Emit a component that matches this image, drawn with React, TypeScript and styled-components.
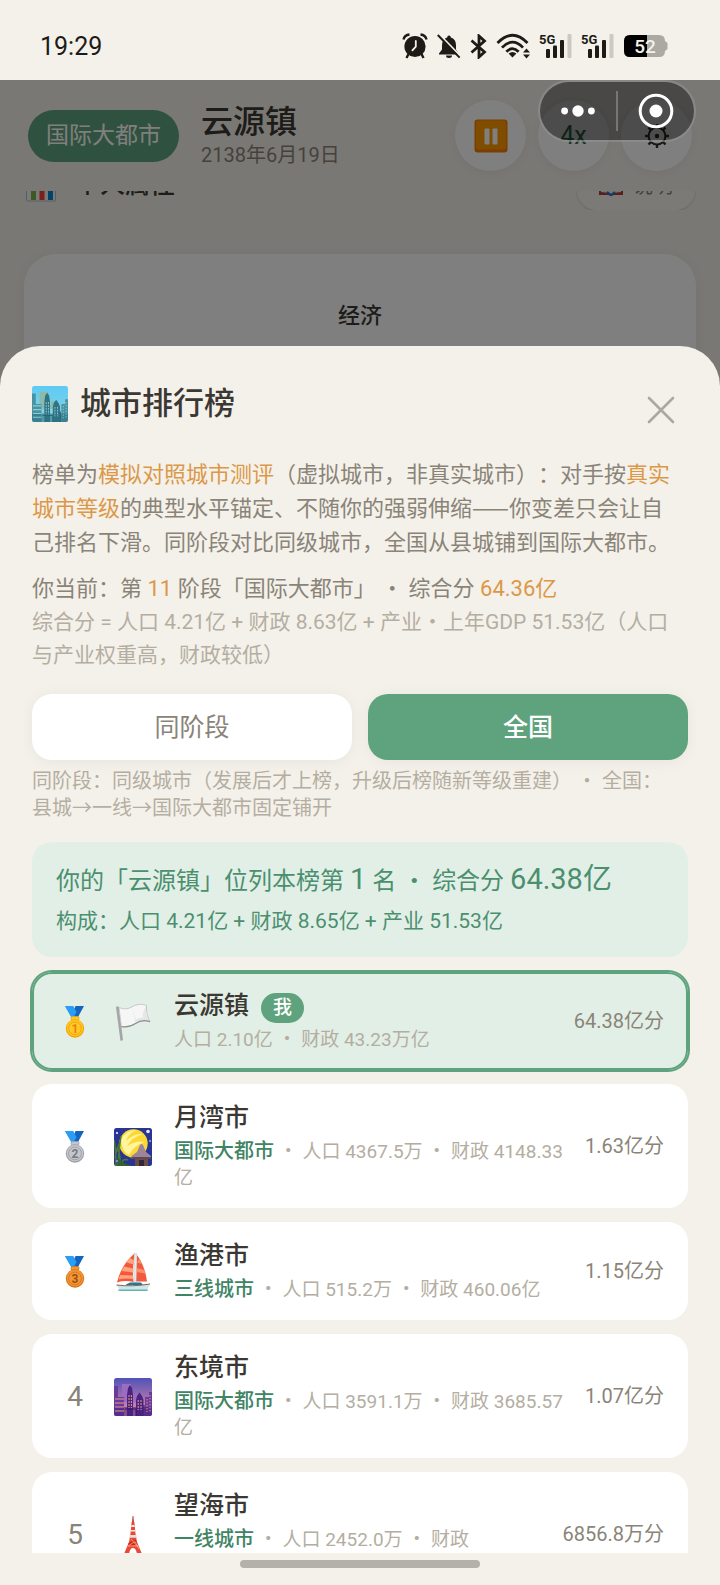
import React, { useState } from 'react';
import styled, { createGlobalStyle } from 'styled-components';

const GlobalStyle = createGlobalStyle`
  * {
    box-sizing: border-box;
  }
  body {
    margin: 0;
    background: #f4f1ea;
    font-family: Roboto, 'Noto Sans CJK SC', sans-serif;
    text-spacing-trim: space-all;
    color: #3b3833;
  }
  button {
    font-family: inherit;
    border: none;
    padding: 0;
    cursor: pointer;
  }
`;

const Screen = styled.div`
  position: relative;
  height: 100vh;
  display: flex;
  flex-direction: column;
  overflow: hidden;
`;

const StatusBar = styled.div`
  flex: none;
  height: 80px;
  padding: 12px 52px 0 40px;
  display: flex;
  justify-content: space-between;
  align-items: center;
  color: #1d1b18;
`;

const Clock = styled.span`
  font-size: 25px;
`;

const StatusIcons = styled.div`
  display: flex;
  align-items: center;
  gap: 9px;
`;

const Page = styled.main`
  flex: 1;
  min-height: 0;
`;

const Header = styled.header`
  height: 111px;
  padding: 0 28px;
  display: flex;
  align-items: center;
  gap: 22px;
`;

const StagePill = styled.span`
  padding: 0 18px;
  line-height: 52px;
  border-radius: 26px;
  background: #5fa37e;
  color: #fff;
  font-size: 23px;
`;

const TownInfo = styled.div`
  flex: 1;
`;

const TownName = styled.div`
  font-size: 32px;
  font-weight: 500;
  line-height: 38px;
`;

const TownDate = styled.div`
  font-size: 20px;
  line-height: 28px;
  color: #8a8478;
`;

const HeaderActions = styled.div`
  display: flex;
  gap: 12px;
`;

const RoundButton = styled.button`
  width: 71px;
  height: 71px;
  border-radius: 50%;
  background: #fff;
  color: #2f6e54;
  font-size: 25px;
  display: flex;
  align-items: center;
  justify-content: center;
  box-shadow: 0 2px 12px rgba(0, 0, 0, 0.06);
`;

// the section row is scrolled halfway under the header
const ScrolledSection = styled.div`
  height: 19px;
  overflow: hidden;
  display: flex;
  align-items: flex-end;
  padding: 0 25px;
`;

const SectionRow = styled.div`
  flex: 1;
  height: 51px;
  display: flex;
  align-items: center;
  gap: 18px;
`;

const SectionTitle = styled.h2`
  flex: 1;
  margin: 0;
  font-size: 25px;
  font-weight: 500;
  line-height: 34px;
`;

const HelpButton = styled.button`
  height: 51px;
  padding: 0 22px;
  border-radius: 20px;
  background: #f7f5ef;
  box-shadow: 0 1px 3px rgba(0, 0, 0, 0.15);
  color: #8a8478;
  font-size: 20px;
  display: flex;
  align-items: center;
  gap: 10px;
`;

const EconomyCard = styled.section`
  margin: 44px 24px 0;
  height: 200px;
  padding-top: 44px;
  border-radius: 32px;
  background: #fff;
  text-align: center;
  font-size: 22px;
  font-weight: 500;
  line-height: 36px;
  box-shadow: 0 2px 16px rgba(0, 0, 0, 0.06);
`;

const Overlay = styled.div`
  position: absolute;
  inset: 80px 0 0;
  padding-top: 266px;
  display: flex;
  flex-direction: column;
  background: rgba(0, 0, 0, 0.5);
`;

const Capsule = styled.div`
  position: absolute;
  top: 80px;
  right: 24px;
  width: 158px;
  height: 62px;
  border: 2px solid rgba(255, 255, 255, 0.35);
  border-radius: 31px;
  background: rgba(0, 0, 0, 0.4);
  display: flex;
  align-items: center;
`;

const CapsuleButton = styled.button`
  flex: 1;
  height: 100%;
  background: none;
  display: flex;
  align-items: center;
  justify-content: center;
`;

const CapsuleDivider = styled.span`
  width: 2px;
  height: 40px;
  background: rgba(255, 255, 255, 0.25);
`;

const Sheet = styled.section`
  flex: 1;
  min-height: 0;
  display: flex;
  flex-direction: column;
  padding: 0 32px;
  border-radius: 40px 40px 0 0;
  background: #f4f1ea;
`;

const SheetHeader = styled.div`
  flex: none;
  height: 112px;
  padding-top: 4px;
  display: flex;
  align-items: center;
  gap: 12px;
`;

const SheetTitle = styled.h1`
  flex: 1;
  margin: 0;
  font-size: 31px;
  font-weight: 500;
  line-height: 40px;
`;

const CloseButton = styled.button`
  width: 54px;
  height: 54px;
  background: none;
  display: flex;
  align-items: center;
  justify-content: center;
  align-self: flex-end;
  margin-bottom: 21px;
`;

const SheetBody = styled.div`
  flex: 1;
  min-height: 0;
  margin: 0 -8px;
  padding: 0 8px;
  overflow: hidden;
`;

const Intro = styled.p`
  margin: 0 0 12px;
  padding-right: 12px;
  font-size: 22px;
  line-height: 34px;
  color: #8a8478;
`;

const Current = styled.p`
  margin: 0;
  font-size: 22px;
  line-height: 34px;
  color: #8a8478;
`;

const Formula = styled.p`
  margin: 0;
  padding-right: 12px;
  font-size: 21px;
  line-height: 33px;
  color: #b4aea2;
`;

const Accent = styled.span`
  color: #dc9849;
`;

// dots and dashes keep their full-width form
const Wide = styled.span`
  font-family: 'Noto Sans CJK SC', sans-serif;
  line-height: 1;
`;

const Tabs = styled.div`
  margin-top: 22px;
  display: flex;
  gap: 16px;
`;

const Tab = styled.button<{ $active: boolean }>`
  flex: 1;
  height: 66px;
  padding-bottom: 5px;
  border-radius: 20px;
  font-size: 25px;
  font-weight: ${(props) => (props.$active ? 500 : 400)};
  color: ${(props) => (props.$active ? '#fff' : '#8a8478')};
  background: ${(props) => (props.$active ? '#5fa37e' : '#fff')};
  box-shadow: 0 2px 16px rgba(0, 0, 0, 0.05);
`;

const Hint = styled.p`
  margin: 8px 0 20px;
  padding-right: 12px;
  font-size: 20px;
  line-height: 27px;
  color: #b4aea2;
`;

const Summary = styled.div`
  padding: 17px 24px;
  border-radius: 20px;
  background: #e2efe6;
  color: #4b8f70;
`;

const SummaryLine = styled.div`
  font-size: 24px;
  line-height: 44px;
`;

const Big = styled.span`
  font-size: 29px;
  line-height: 1;
`;

const SummaryDetail = styled.div`
  font-size: 21px;
  line-height: 37px;
`;

const RankList = styled.ol`
  list-style: none;
  margin: 15px 0 0;
  padding: 0;
  display: flex;
  flex-direction: column;
  gap: 14px;
`;

const RankRow = styled.li<{ $me?: boolean }>`
  display: flex;
  align-items: center;
  gap: 20px;
  padding: 17px 24px;
  border-radius: 20px;
  background: ${(props) => (props.$me ? '#e2efe6' : '#fff')};
  box-shadow: ${(props) =>
    props.$me ? '0 0 0 2px #5fa37e, inset 0 0 0 2px #5fa37e' : 'none'};
`;

const RankCell = styled.div`
  flex: none;
  width: 38px;
  padding-top: 2px;
  display: flex;
  justify-content: center;
  font-size: 28px;
  line-height: 38px;
  color: #8a8478;
`;

const CityIcon = styled.div`
  flex: none;
  width: 40px;
  padding-top: 2px;
  display: flex;
`;

const CityInfo = styled.div`
  flex: 1;
  min-width: 0;
`;

const CityName = styled.div`
  display: flex;
  align-items: flex-end;
  gap: 12px;
  margin-bottom: 4px;
  font-size: 25px;
  font-weight: 500;
  line-height: 34px;
`;

const MeBadge = styled.span`
  padding: 0 12px;
  border-radius: 15px;
  background: #5fa37e;
  color: #fff;
  font-size: 19px;
  line-height: 30px;
`;

const CityMeta = styled.div`
  font-size: 19px;
  line-height: 26px;
  color: #b4aea2;
`;

const Tier = styled.span`
  font-size: 20px;
  font-weight: 500;
  line-height: 1;
  color: #3f8464;
`;

const Score = styled.div`
  flex: none;
  font-size: 20px;
  line-height: 30px;
  color: #8a8478;
`;

const HomeBar = styled.div`
  flex: none;
  height: 32px;
  padding-top: 7px;
  display: flex;
  justify-content: center;

  &::after {
    content: '';
    width: 240px;
    height: 8px;
    border-radius: 4px;
    background: #b4b1aa;
  }
`;

const AlarmIcon = () => (
  <svg width="26" height="26" viewBox="0 0 26 26" fill="none">
    <path d="M1.5 6.5 Q2.5 2 7.5 1.5 M24.5 6.5 Q23.5 2 18.5 1.5" stroke="#1d1b18" strokeWidth="2.4" />
    <circle cx="13" cy="13.5" r="10.6" fill="#1d1b18" />
    <path d="M6.5 21 L4.5 25 M19.5 21 L21.5 25" stroke="#1d1b18" strokeWidth="2.4" />
    <path d="M13.8 8 V13.6 L10.4 17.4" stroke="#f4f1ea" strokeWidth="1.8" strokeLinecap="round" />
  </svg>
);

const MuteIcon = () => (
  <svg width="24" height="25" viewBox="0 0 24 25">
    <path d="M12 1.5 Q13.8 1.5 13.8 3.4 Q19 5 19 11 V15.5 L21.5 19.5 V20.5 H2 V19.5 L5 15.5 V11 Q5 5 10.2 3.4 Q10.2 1.5 12 1.5 Z M9 21.5 H15 Q15 24 12 24 Q9 24 9 21.5 Z" fill="#1d1b18" />
    <path d="M2.6 .6 L24 22.6" stroke="#f4f1ea" strokeWidth="1.8" />
    <path d="M.8 1 L22.6 23.6" stroke="#1d1b18" strokeWidth="2" />
  </svg>
);

const BluetoothIcon = () => (
  <svg width="17" height="25" viewBox="0 0 17 25" fill="none" stroke="#1d1b18" strokeWidth="2.8">
    <path d="M1.5 6.5 L14.5 18 L9 23 V2 L14.5 7 L1.5 18.5" />
  </svg>
);

const WifiIcon = () => (
  <svg width="34" height="26" viewBox="0 0 34 26" fill="none" stroke="#1d1b18" strokeWidth="2.8">
    <path d="M1.5 10 Q16.5 -5.5 31.5 10" />
    <path d="M6 14.6 Q16.5 3.6 27 14.6" />
    <path d="M10.4 18.8 Q16.5 12.6 22.6 18.8" />
    <path d="M16.5 24.5 L12.6 20.6 Q16.5 17.4 20.4 20.6 Z" fill="#1d1b18" stroke="none" />
    <path d="M30.5 15.5 L34 19.5 H27 Z M30.5 25.5 L34 21.5 H27 Z" fill="#1d1b18" stroke="none" />
  </svg>
);

const SignalIcon = () => (
  <svg width="33" height="26" viewBox="0 0 33 26">
    <text x="0" y="11" fontSize="13" fontWeight="700" fontFamily="Roboto, sans-serif" fill="#1d1b18">5G</text>
    <rect x="7" y="16" width="4" height="9" rx="1" fill="#1d1b18" />
    <rect x="14" y="12.5" width="4" height="12.5" rx="1" fill="#1d1b18" />
    <rect x="21" y="7" width="4" height="18" rx="1" fill="#1d1b18" />
    <rect x="28.5" y="1" width="4" height="24" rx="1" fill="#cbc9c3" />
  </svg>
);

const BatteryIcon = () => (
  <svg width="45" height="24" viewBox="0 0 45 24">
    <path d="M7 1 H36 Q42 1 42 7 L44.5 9 V15 L42 17 Q42 23 36 23 H7 Q1 23 1 17 V7 Q1 1 7 1 Z" fill="#aba9a4" />
    <path d="M7 1 H24 V23 H7 Q1 23 1 17 V7 Q1 1 7 1 Z" fill="#000" />
    <text x="22" y="19" fontSize="19" textAnchor="middle" fontFamily="Roboto, sans-serif" fontWeight="500" fill="#f4f1ea">52</text>
  </svg>
);

const PauseIcon = () => (
  <svg width="34" height="34" viewBox="0 0 34 34">
    <rect x=".5" y=".5" width="33" height="33" rx="3" fill="#f57c00" />
    <rect x="2" y="1.5" width="30" height="29" rx="2.5" fill="#ff9800" />
    <rect x="10.5" y="9.5" width="5" height="16" rx="1" fill="#fff" />
    <rect x="18.5" y="9.5" width="5" height="16" rx="1" fill="#fff" />
  </svg>
);

const GearIcon = () => (
  <svg width="26" height="26" viewBox="0 0 26 26" fill="none" stroke="#33302b">
    <circle cx="13" cy="13" r="8.4" strokeWidth="2" />
    <circle cx="13" cy="13" r="2.2" fill="#33302b" stroke="none" />
    {[0, 45, 90, 135, 180, 225, 270, 315].map((angle) => (
      <path key={angle} d="M13 4.6 V1" strokeWidth="2.4" transform={`rotate(${angle} 13 13)`} />
    ))}
  </svg>
);

const ChartIcon = () => (
  <svg width="32" height="34" viewBox="0 0 32 34">
    <rect x="1.5" y="1" width="29" height="32" rx="1" fill="#f5f5f5" stroke="#b0bec5" />
    <rect x="6" y="9" width="5" height="23" fill="#7cb342" />
    <rect x="14.5" y="4" width="5" height="28" fill="#f44336" />
    <rect x="23" y="13" width="5" height="19" fill="#0288d1" />
  </svg>
);

const BookIcon = () => (
  <svg width="24" height="24" viewBox="0 0 24 24">
    <path d="M0 4 H24 V22 H15 L12 23 L9 22 H0 Z" fill="#b0413b" />
    <path d="M2 2 H22 V19 L14 20 L12 22 L10 20 L2 19 Z" fill="#e6ebee" />
    <path d="M8 19 L12 22 L16 19" stroke="#1976d2" strokeWidth="2" fill="none" />
  </svg>
);

const DotsIcon = () => (
  <svg width="34" height="14" viewBox="0 0 34 14" fill="#fff">
    <circle cx="3.6" cy="7" r="3.4" />
    <circle cx="17" cy="7" r="5.7" />
    <circle cx="30.4" cy="7" r="3.4" />
  </svg>
);

const TargetIcon = () => (
  <svg width="36" height="36" viewBox="0 0 36 36">
    <circle cx="18" cy="18" r="15.8" fill="none" stroke="#fff" strokeWidth="3" />
    <circle cx="18" cy="18" r="6.5" fill="#fff" />
  </svg>
);

const CloseIcon = () => (
  <svg width="28" height="28" viewBox="0 0 28 28" stroke="#aca8a0" strokeWidth="2.6" strokeLinecap="round">
    <path d="M2 2 L26 26 M26 2 L2 26" />
  </svg>
);

const SKYLINE = {
  day: { top: '#5ccbf5', bottom: '#8fd3e0', far: '#8db9a8', near: '#4a93a3', front: '#2f7384', light: '#8ccbd0', line: '#28626f' },
  dusk: { top: '#5052b8', bottom: '#f08fa5', far: '#9c6cc0', near: '#6a3b9c', front: '#4a2383', light: '#e79b80', line: '#351667' },
};

const CityscapeIcon = ({ mode, size }: { mode: 'day' | 'dusk'; size: number }) => {
  const c = SKYLINE[mode];
  return (
    <svg width={size} height={size} viewBox="0 0 38 38">
      <defs>
        <linearGradient id={`sky-${mode}`} x1="0" y1="0" x2="0" y2="1">
          <stop offset="0" stopColor={c.top} />
          <stop offset="1" stopColor={c.bottom} />
        </linearGradient>
        <clipPath id={`frame-${mode}`}>
          <rect width="38" height="38" rx="2.5" />
        </clipPath>
      </defs>
      <g clipPath={`url(#frame-${mode})`}>
        <rect width="38" height="38" fill={`url(#sky-${mode})`} />
        <path d="M8 6 H17 V20 H20 V16 H24 V24 H8 Z" fill={c.far} />
        <path d="M0 8 H4 V19 H10 V38 H0 Z" fill={c.near} />
        <path d="M13 38 V17 L14 10 L16 7 L18 10 L19 17 V38 Z" fill={c.front} />
        <path d="M22 38 V22 L23 18 L25.5 14.5 L28 18 L29.5 22 V38 Z" fill={c.front} />
        <path d="M31 38 V19 H35 V14 H38 V38 Z" fill={c.near} />
        <path d="M0 29 H38 V38 H0 Z" fill={c.front} opacity=".6" />
        <path d="M1 21 H10 M1 25 H10 M1 29 H10 M1 33 H10" stroke={c.light} strokeWidth="1.2" />
        <path d="M15 17 V30 M17.4 17 V30 M24.2 22 V32 M27 22 V32" stroke={c.light} strokeWidth="1" strokeDasharray="2 1" />
        <path d="M33 21 V34 M36 17 V34" stroke={c.light} strokeWidth="1" strokeDasharray="1.4 1.6" />
        <path d="M11 31 H22 V38 M30 27 V38" stroke={c.line} fill="none" />
      </g>
    </svg>
  );
};

const MEDALS: Record<number, [string, string, string]> = {
  1: ['#ffc928', '#f5a400', '#ef7d16'],
  2: ['#c5c7cc', '#9fa2a9', '#76797f'],
  3: ['#f5983a', '#d87614', '#9c4f10'],
};

const MedalIcon = ({ place }: { place: number }) => {
  const [fill, rim, ink] = MEDALS[place];
  return (
    <svg width="20" height="32" viewBox="0 0 20 32">
      <path d="M0 0 H8 L14 10 L7 12 Z" fill="#2196f3" />
      <path d="M10.5 0 H19 L13 11 H9.5 L7.8 7.5 Z" fill="#1565c0" />
      <path d="M0 0 H8 L11.5 6 L8.5 11.5 H6.5 Z" fill="#2a9df4" />
      <rect x="6" y="10.6" width="8" height="3.6" rx="1.5" fill={fill} stroke={rim} strokeWidth=".8" />
      <circle cx="10" cy="22.5" r="9.2" fill={rim} />
      <circle cx="10" cy="22.1" r="8.2" fill={fill} />
      <circle cx="10" cy="22.4" r="6.4" fill={fill} stroke={rim} strokeWidth="1" />
      <text x="10" y="26.8" fontSize="12" fontWeight="700" textAnchor="middle" fontFamily="Roboto, sans-serif" fill={ink}>{place}</text>
    </svg>
  );
};

const FlagIcon = () => (
  <svg width="38" height="38" viewBox="0 0 38 38">
    <path d="M2 4 Q3.5 2.4 4.8 4 L9 37 Q7.6 38.4 6.4 37.4 Z" fill="#a3a5a6" />
    <path d="M5 4.6 Q12 7.5 18 3.8 Q25 -.4 32.5 2.4 Q32 12 36 18.6 Q28 16 21.5 20.6 Q15 25 7.4 23.6 Z" fill="#f6f6f6" stroke="#bdbfbf" strokeWidth=".8" />
    <path d="M18 4 Q20 13 21.5 20 Q27 16 35 18 Q31 11 32 3 Q28 10 29 15 Q25 14 22 17 Z" fill="#e6e6e6" />
    <path d="M7.4 23.6 Q15 25 21.5 20.6 Q28 16 36 18.6" fill="none" stroke="#8f9192" strokeWidth="1.2" />
  </svg>
);

const MoonIcon = () => (
  <svg width="38" height="38" viewBox="0 0 38 38">
    <rect width="38" height="38" rx="2.5" fill="#283593" />
    <circle cx="19.5" cy="15.5" r="14.2" fill="#fdd835" />
    <path d="M7 12 Q12 2 22 2 Q14 6 12 13 Q20 5 29 6 Q18 9 13 18 Q22 12 31 14 Q20 17 15 27 Q8 24 7 12 Z" fill="#fff59d" />
    <path d="M2 38 Q2 20 0 12 M4 38 Q5 20 7 8 M6 38 Q7 24 2 20 M8 38 Q7 30 14 32 M1 30 Q3 20 6 14" stroke="#4b7a35" strokeWidth="1.5" fill="none" />
    <path d="M4 30 Q9 36 18 38 H4 Z" fill="#33602e" />
    <path d="M21 30 H34 V38 H21 Z" fill="#6d4c41" />
    <path d="M17.5 28 L23 24 L26 17 Q27.5 15 29 17 L32 24 L37 28 V31 H17.5 Z" fill="#9c8499" />
    <path d="M17.5 29 H37 V31 H17.5 Z" fill="#604754" />
    <rect x="25" y="32" width="5" height="6" fill="#33253a" />
    <circle cx="34" cy="3.5" r="1.8" fill="#e8eaf6" />
    <circle cx="3" cy="5" r="1" fill="#fff" />
    <circle cx="36" cy="13" r=".8" fill="#fff" />
    <circle cx="3" cy="33" r=".7" fill="#fff" />
  </svg>
);

const SailboatIcon = () => (
  <svg width="38" height="38" viewBox="0 0 38 38">
    <path d="M20.5 .5 Q18 16 19.5 29 Q11 27 3 29.5 Q7 12 20.5 .5 Z" fill="#f4573a" />
    <path d="M16 5 L20 7.5 V11.5 L12.5 9.5 Z M10 13.5 L19.4 15.5 V19.5 L7.6 18 Z M6 22 L19.2 22.5 V26 Q11 25 4.6 26.5 Z" fill="#ffa57f" />
    <path d="M23 2 Q31 13 33 28.5 H22 Z" fill="#f15a3d" />
    <path d="M25.2 6 L28 11 L22.8 9.5 Z M22.6 15 L30.4 17 L31.4 20.6 L22.4 19 Z" fill="#ff8f6b" />
    <path d="M20.4 0 H22.4 L22.2 32 H20 Z" fill="#eceff1" stroke="#9fb0b8" strokeWidth=".4" />
    <path d="M12 31.5 L16 29.6 H27 L29 32 H12 Z" fill="#1f7b95" />
    <path d="M2.5 32 Q18 34 36 31 L33 37 H6 Z" fill="#cfe6e6" />
    <path d="M2.5 32 Q18 34 36 31" fill="none" stroke="#8c5f56" strokeWidth="1" />
    <path d="M3.6 36.6 H34 L33.4 38 H5 Z" fill="#5fb5b5" />
  </svg>
);

const TowerIcon = () => (
  <svg width="38" height="38" viewBox="0 0 38 38">
    <path d="M18.6 0 H19.4 L20 7 H18 Z" fill="#b3362c" />
    <path d="M17.6 6 H20.4 L21.4 17 L23 26 L28 38 H23 Q22 32 19 32 Q16 32 15 38 H10 L15 26 L16.6 17 Z" fill="#ea4a33" />
    <path d="M17.4 9 H20.6 L20.8 11 H17.2 Z M17 14 H21 V15.4 H17 Z" fill="#f5e9e4" />
    <rect x="15.4" y="19" width="7.2" height="2.8" rx=".6" fill="#e8dedb" />
    <path d="M14.6 27 L21.5 23.5 L23.6 28.5 L14 30 Z" fill="#c9281c" />
    <path d="M14 30 L21 25.5 L25 33 M17 23 L24 31 M13.4 30 H24.6" stroke="#ffb199" strokeWidth=".7" fill="none" />
  </svg>
);

interface City {
  name: string;
  tier?: string;
  people: string;
  money: string;
  score: string;
  icon: React.ReactNode;
  me?: boolean;
}

const cities: City[] = [
  { name: '云源镇', people: '2.10亿', money: '43.23万亿', score: '64.38亿分', icon: <FlagIcon />, me: true },
  { name: '月湾市', tier: '国际大都市', people: '4367.5万', money: '4148.33亿', score: '1.63亿分', icon: <MoonIcon /> },
  { name: '渔港市', tier: '三线城市', people: '515.2万', money: '460.06亿', score: '1.15亿分', icon: <SailboatIcon /> },
  { name: '东境市', tier: '国际大都市', people: '3591.1万', money: '3685.57亿', score: '1.07亿分', icon: <CityscapeIcon mode="dusk" size={38} /> },
  { name: '望海市', tier: '一线城市', people: '2452.0万', money: '12210.48亿', score: '6856.8万分', icon: <TowerIcon /> },
];

const App = () => {
  const [tab, setTab] = useState('all');

  return (
    <>
      <GlobalStyle />
      <Screen>
        <StatusBar>
          <Clock>19:29</Clock>
          <StatusIcons>
            <AlarmIcon />
            <MuteIcon />
            <BluetoothIcon />
            <WifiIcon />
            <SignalIcon />
            <SignalIcon />
            <BatteryIcon />
          </StatusIcons>
        </StatusBar>

        <Page>
          <Header>
            <StagePill>国际大都市</StagePill>
            <TownInfo>
              <TownName>云源镇</TownName>
              <TownDate>2138年6月19日</TownDate>
            </TownInfo>
            <HeaderActions>
              <RoundButton aria-label="暂停"><PauseIcon /></RoundButton>
              <RoundButton>4x</RoundButton>
              <RoundButton aria-label="设置"><GearIcon /></RoundButton>
            </HeaderActions>
          </Header>
          <ScrolledSection>
            <SectionRow>
              <ChartIcon />
              <SectionTitle>个人属性</SectionTitle>
              <HelpButton><BookIcon />说明</HelpButton>
            </SectionRow>
          </ScrolledSection>
          <EconomyCard>经济</EconomyCard>
        </Page>

        <Overlay>
          <Sheet>
            <SheetHeader>
              <CityscapeIcon mode="day" size={36} />
              <SheetTitle>城市排行榜</SheetTitle>
              <CloseButton aria-label="关闭"><CloseIcon /></CloseButton>
            </SheetHeader>

            <SheetBody>
              <Intro>
                榜单为<Accent>模拟对照城市测评</Accent>（虚拟城市，非真实城市）：对手按<Accent>真实城市等级</Accent>的典型水平锚定、不随你的强弱伸缩<Wide>——</Wide>你变差只会让自己排名下滑。同阶段对比同级城市，全国从县城铺到国际大都市。
              </Intro>
              <Current>
                你当前：第 <Accent>11</Accent> 阶段「国际大都市」 <Wide>·</Wide> 综合分 <Accent>64.36亿</Accent>
              </Current>
              <Formula>
                综合分 = 人口 4.21亿 + 财政 8.63亿 + 产业<Wide>·</Wide>上年GDP 51.53亿（人口与产业权重高，财政较低）
              </Formula>

              <Tabs>
                <Tab $active={tab === 'stage'} onClick={() => setTab('stage')}>同阶段</Tab>
                <Tab $active={tab === 'all'} onClick={() => setTab('all')}>全国</Tab>
              </Tabs>
              <Hint>
                同阶段：同级城市（发展后才上榜，升级后榜随新等级重建） <Wide>·</Wide> 全国：县城→一线→国际大都市固定铺开
              </Hint>

              <Summary>
                <SummaryLine>
                  你的「云源镇」位列本榜第 <Big>1</Big> 名 <Wide>·</Wide> 综合分 <Big>64.38亿</Big>
                </SummaryLine>
                <SummaryDetail>构成：人口 4.21亿 + 财政 8.65亿 + 产业 51.53亿</SummaryDetail>
              </Summary>

              <RankList>
                {cities.map((city, index) => (
                  <RankRow key={city.name} $me={city.me}>
                    <RankCell>{index < 3 ? <MedalIcon place={index + 1} /> : index + 1}</RankCell>
                    <CityIcon>{city.icon}</CityIcon>
                    <CityInfo>
                      <CityName>
                        {city.name}
                        {city.me && <MeBadge>我</MeBadge>}
                      </CityName>
                      <CityMeta>
                        {city.tier && <><Tier>{city.tier}</Tier> <Wide>·</Wide> </>}
                        人口 {city.people} <Wide>·</Wide> 财政 {city.money}
                      </CityMeta>
                    </CityInfo>
                    <Score>{city.score}</Score>
                  </RankRow>
                ))}
              </RankList>
            </SheetBody>
            <HomeBar />
          </Sheet>
        </Overlay>

        <Capsule>
          <CapsuleButton aria-label="更多"><DotsIcon /></CapsuleButton>
          <CapsuleDivider />
          <CapsuleButton aria-label="退出"><TargetIcon /></CapsuleButton>
        </Capsule>
      </Screen>
    </>
  );
};

export default App;
